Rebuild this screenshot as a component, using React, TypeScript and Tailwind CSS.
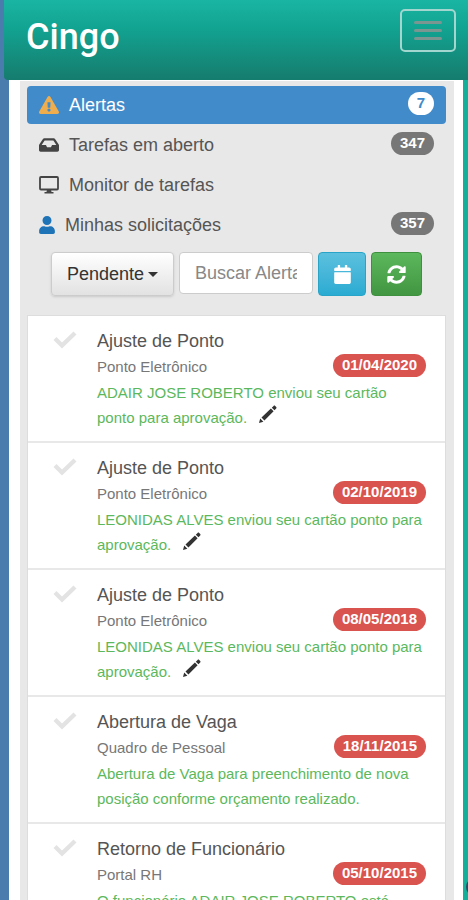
import { useState } from 'react'
import { FaCalendar, FaExclamationTriangle, FaInbox, FaSyncAlt, FaUser } from 'react-icons/fa'

type Alert = {
  id: number
  title: string
  source: string
  message: string
  date: string
  editable?: boolean
}

const alerts: Alert[] = [
  {
    id: 1,
    title: 'Ajuste de Ponto',
    source: 'Ponto Eletrônico',
    message: 'ADAIR JOSE ROBERTO enviou seu cartão ponto para aprovação.',
    date: '01/04/2020',
    editable: true,
  },
  {
    id: 2,
    title: 'Ajuste de Ponto',
    source: 'Ponto Eletrônico',
    message: 'LEONIDAS ALVES enviou seu cartão ponto para aprovação.',
    date: '02/10/2019',
    editable: true,
  },
  {
    id: 3,
    title: 'Ajuste de Ponto',
    source: 'Ponto Eletrônico',
    message: 'LEONIDAS ALVES enviou seu cartão ponto para aprovação.',
    date: '08/05/2018',
    editable: true,
  },
  {
    id: 4,
    title: 'Abertura de Vaga',
    source: 'Quadro de Pessoal',
    message: 'Abertura de Vaga para preenchimento de nova posição conforme orçamento realizado.',
    date: '18/11/2015',
  },
  {
    id: 5,
    title: 'Retorno de Funcionário',
    source: 'Portal RH',
    message: 'O funcionário ADAIR JOSE ROBERTO está',
    date: '05/10/2015',
  },
]

function MonitorIcon() {
  return (
    <svg viewBox="0 0 20 18" className="h-[18px] w-5" aria-hidden="true">
      <rect x="1" y="1" width="18" height="12.5" rx="1" fill="none" stroke="#444" strokeWidth="1.8" />
      <path d="M8 13.5h4l.5 2.5h2v1.6h-9V16h2z" fill="#444" />
    </svg>
  )
}

function CheckIcon() {
  return (
    <svg viewBox="0 0 24 18" className="h-[18px] w-6" aria-hidden="true">
      <path d="M.5 9 3.500 6l5.500 5.500L20.500.5 23.500 3.500 9 17.500z" fill="#e3e3e3" />
    </svg>
  )
}

function PencilIcon() {
  return (
    <svg viewBox="0 0 18 18" className="h-[18px] w-[18px]" aria-hidden="true">
      <path d="M0 18l1.200-4.400 3.200 3.200zM2.500 12.600 11.900 3.600l2.700 2.700-9.200 9.200zM12.800 2.700 14.600.9c.5-.5 1.100-.5 1.600 0l1 1c.5.500.5 1.100 0 1.600l-1.700 1.800z" fill="#333" />
    </svg>
  )
}

function MenuRow({ icon, label, count, active }: {
  icon: React.ReactNode
  label: string
  count?: number
  active?: boolean
}) {
  return (
    <a
      href="#"
      className={`flex h-[38px] items-center gap-[10px] rounded px-3 text-lg ${active ? 'bg-[#428bca] text-white' : 'text-[#555]'}`}
    >
      {icon}
      <span className="flex-1">{label}</span>
      {count !== undefined && (
        <span
          className={`mb-1 flex h-[23px] items-center rounded-full px-[9px] text-[15px] font-bold ${active ? 'bg-white text-[#428bca]' : 'bg-[#777] text-white'}`}
        >
          {count}
        </span>
      )}
    </a>
  )
}

function AlertItem({ alert }: { alert: Alert }) {
  return (
    <li className="flex border-b-2 border-[#e8e8e8] pt-3 pr-[17px] pb-[11px] pl-[25px]">
      <button aria-label="Marcar como lido" className="mt-[3px] mr-5 h-[18px] w-6 shrink-0">
        <CheckIcon />
      </button>
      <div className="min-w-0 flex-1">
        <h2 className="text-lg leading-[26px] text-[#555]">{alert.title}</h2>
        <div className="flex h-[26px] items-start justify-between pr-[2px]">
          <p className="text-[15px] leading-[26px] text-[#777]">{alert.source}</p>
          <span className="flex h-[23px] items-center rounded-full bg-[#d9534f] px-[9px] text-[15px] font-bold text-white">
            {alert.date}
          </span>
        </div>
        <p className="pr-[3px] text-[15px] leading-[25px] text-[#5cb85c]">
          {alert.message}
          {alert.editable && (
            <button aria-label="Editar" className="ml-3 inline-block h-[18px] w-[18px]">
              <PencilIcon />
            </button>
          )}
        </p>
      </div>
    </li>
  )
}

export default function App() {
  const [status, setStatus] = useState('Pendente')
  const [search, setSearch] = useState('')

  return (
    <div className="relative flex h-screen flex-col overflow-hidden bg-linear-to-r from-[#4a7cae] from-50% to-[#10b09b] to-50% font-['Liberation_Sans',Arial,sans-serif]">
      <header className="ml-1 flex h-20 shrink-0 items-start justify-between rounded-bl bg-linear-to-b from-[#1ab5a3] via-[#12a391] via-35% to-[#157c6e] pr-3 pl-[22px]">
        <a href="#" className="pt-[14px] font-[Roboto,sans-serif] text-[36px] leading-[46px] font-medium text-white">
          Cingo
        </a>
        <button
          aria-label="Menu"
          className="mt-[9px] flex h-[43px] w-14 flex-col items-center justify-center gap-[5px] rounded-[5px] border-2 border-[#a3d6cf]"
        >
          <span className="h-[3px] w-7 rounded-full bg-[#7b9691]" />
          <span className="h-[3px] w-7 rounded-full bg-[#7b9691]" />
          <span className="h-[3px] w-7 rounded-full bg-[#7b9691]" />
        </button>
      </header>

      <main className="mr-[5px] ml-[9px] flex min-h-0 flex-1 bg-white pr-[9px] pl-[11px]">
        <div className="min-w-0 flex-1 border-t border-white bg-[#e8e8e8] pt-[5px] pr-2 pl-[7px]">
          <nav className="flex flex-col gap-[2px]">
            <MenuRow
              active
              label="Alertas"
              count={7}
              icon={<FaExclamationTriangle className="h-5 w-5 text-[#f0ad4e]" />}
            />
            <MenuRow label="Tarefas em aberto" count={347} icon={<FaInbox className="h-5 w-5 text-[#444]" />} />
            <MenuRow label="Monitor de tarefas" icon={<MonitorIcon />} />
            <MenuRow label="Minhas solicitações" count={357} icon={<FaUser className="h-[18px] w-4 text-[#1f73b7]" />} />
          </nav>

          <form className="mt-2 mr-6 mb-[19px] ml-6 flex gap-[5px]" onSubmit={(e) => e.preventDefault()}>
            <div className="relative h-11 w-[123px] shrink-0">
              <select
                aria-label="Situação"
                value={status}
                onChange={(e) => setStatus(e.target.value)}
                className="h-full w-full appearance-none rounded border border-[#ccc] bg-linear-to-b from-white to-[#e2e2e2] pl-[15px] text-lg text-[#333] shadow-sm"
              >
                <option>Pendente</option>
                <option>Concluído</option>
              </select>
              <svg viewBox="0 0 10 5" className="pointer-events-none absolute top-5 right-4 h-[5px] w-[10px]" aria-hidden="true">
                <path d="M0 0h10L5 5z" fill="#333" />
              </svg>
            </div>
            <input
              type="text"
              aria-label="Buscar Alertas"
              placeholder="Buscar Alertas"
              value={search}
              onChange={(e) => setSearch(e.target.value)}
              className="h-[42px] min-w-0 flex-1 rounded border border-[#ccc] bg-white px-[15px] text-lg text-[#555] placeholder:text-[#888]"
            />
            <button
              aria-label="Calendário"
              className="flex h-11 w-12 shrink-0 items-center justify-center rounded border border-[#28a4c9] bg-linear-to-b from-[#5bc0de] to-[#2aabd2] text-white"
            >
              <FaCalendar className="h-[19px] w-[17px]" />
            </button>
            <button
              aria-label="Atualizar"
              className="flex h-11 w-[51px] shrink-0 items-center justify-center rounded border border-[#3e8f3e] bg-linear-to-b from-[#5cb85c] to-[#419641] text-white"
            >
              <FaSyncAlt className="h-[19px] w-[19px]" />
            </button>
          </form>

          <ul className="border border-[#ddd] bg-white">
            {alerts.map((alert) => (
              <AlertItem key={alert.id} alert={alert} />
            ))}
          </ul>
        </div>
      </main>

      {/* round widget peeking in from the right edge */}
      <span className="absolute -right-4 bottom-1 h-[18px] w-[18px] rounded-full bg-[#2b4a63]" />
    </div>
  )
}
